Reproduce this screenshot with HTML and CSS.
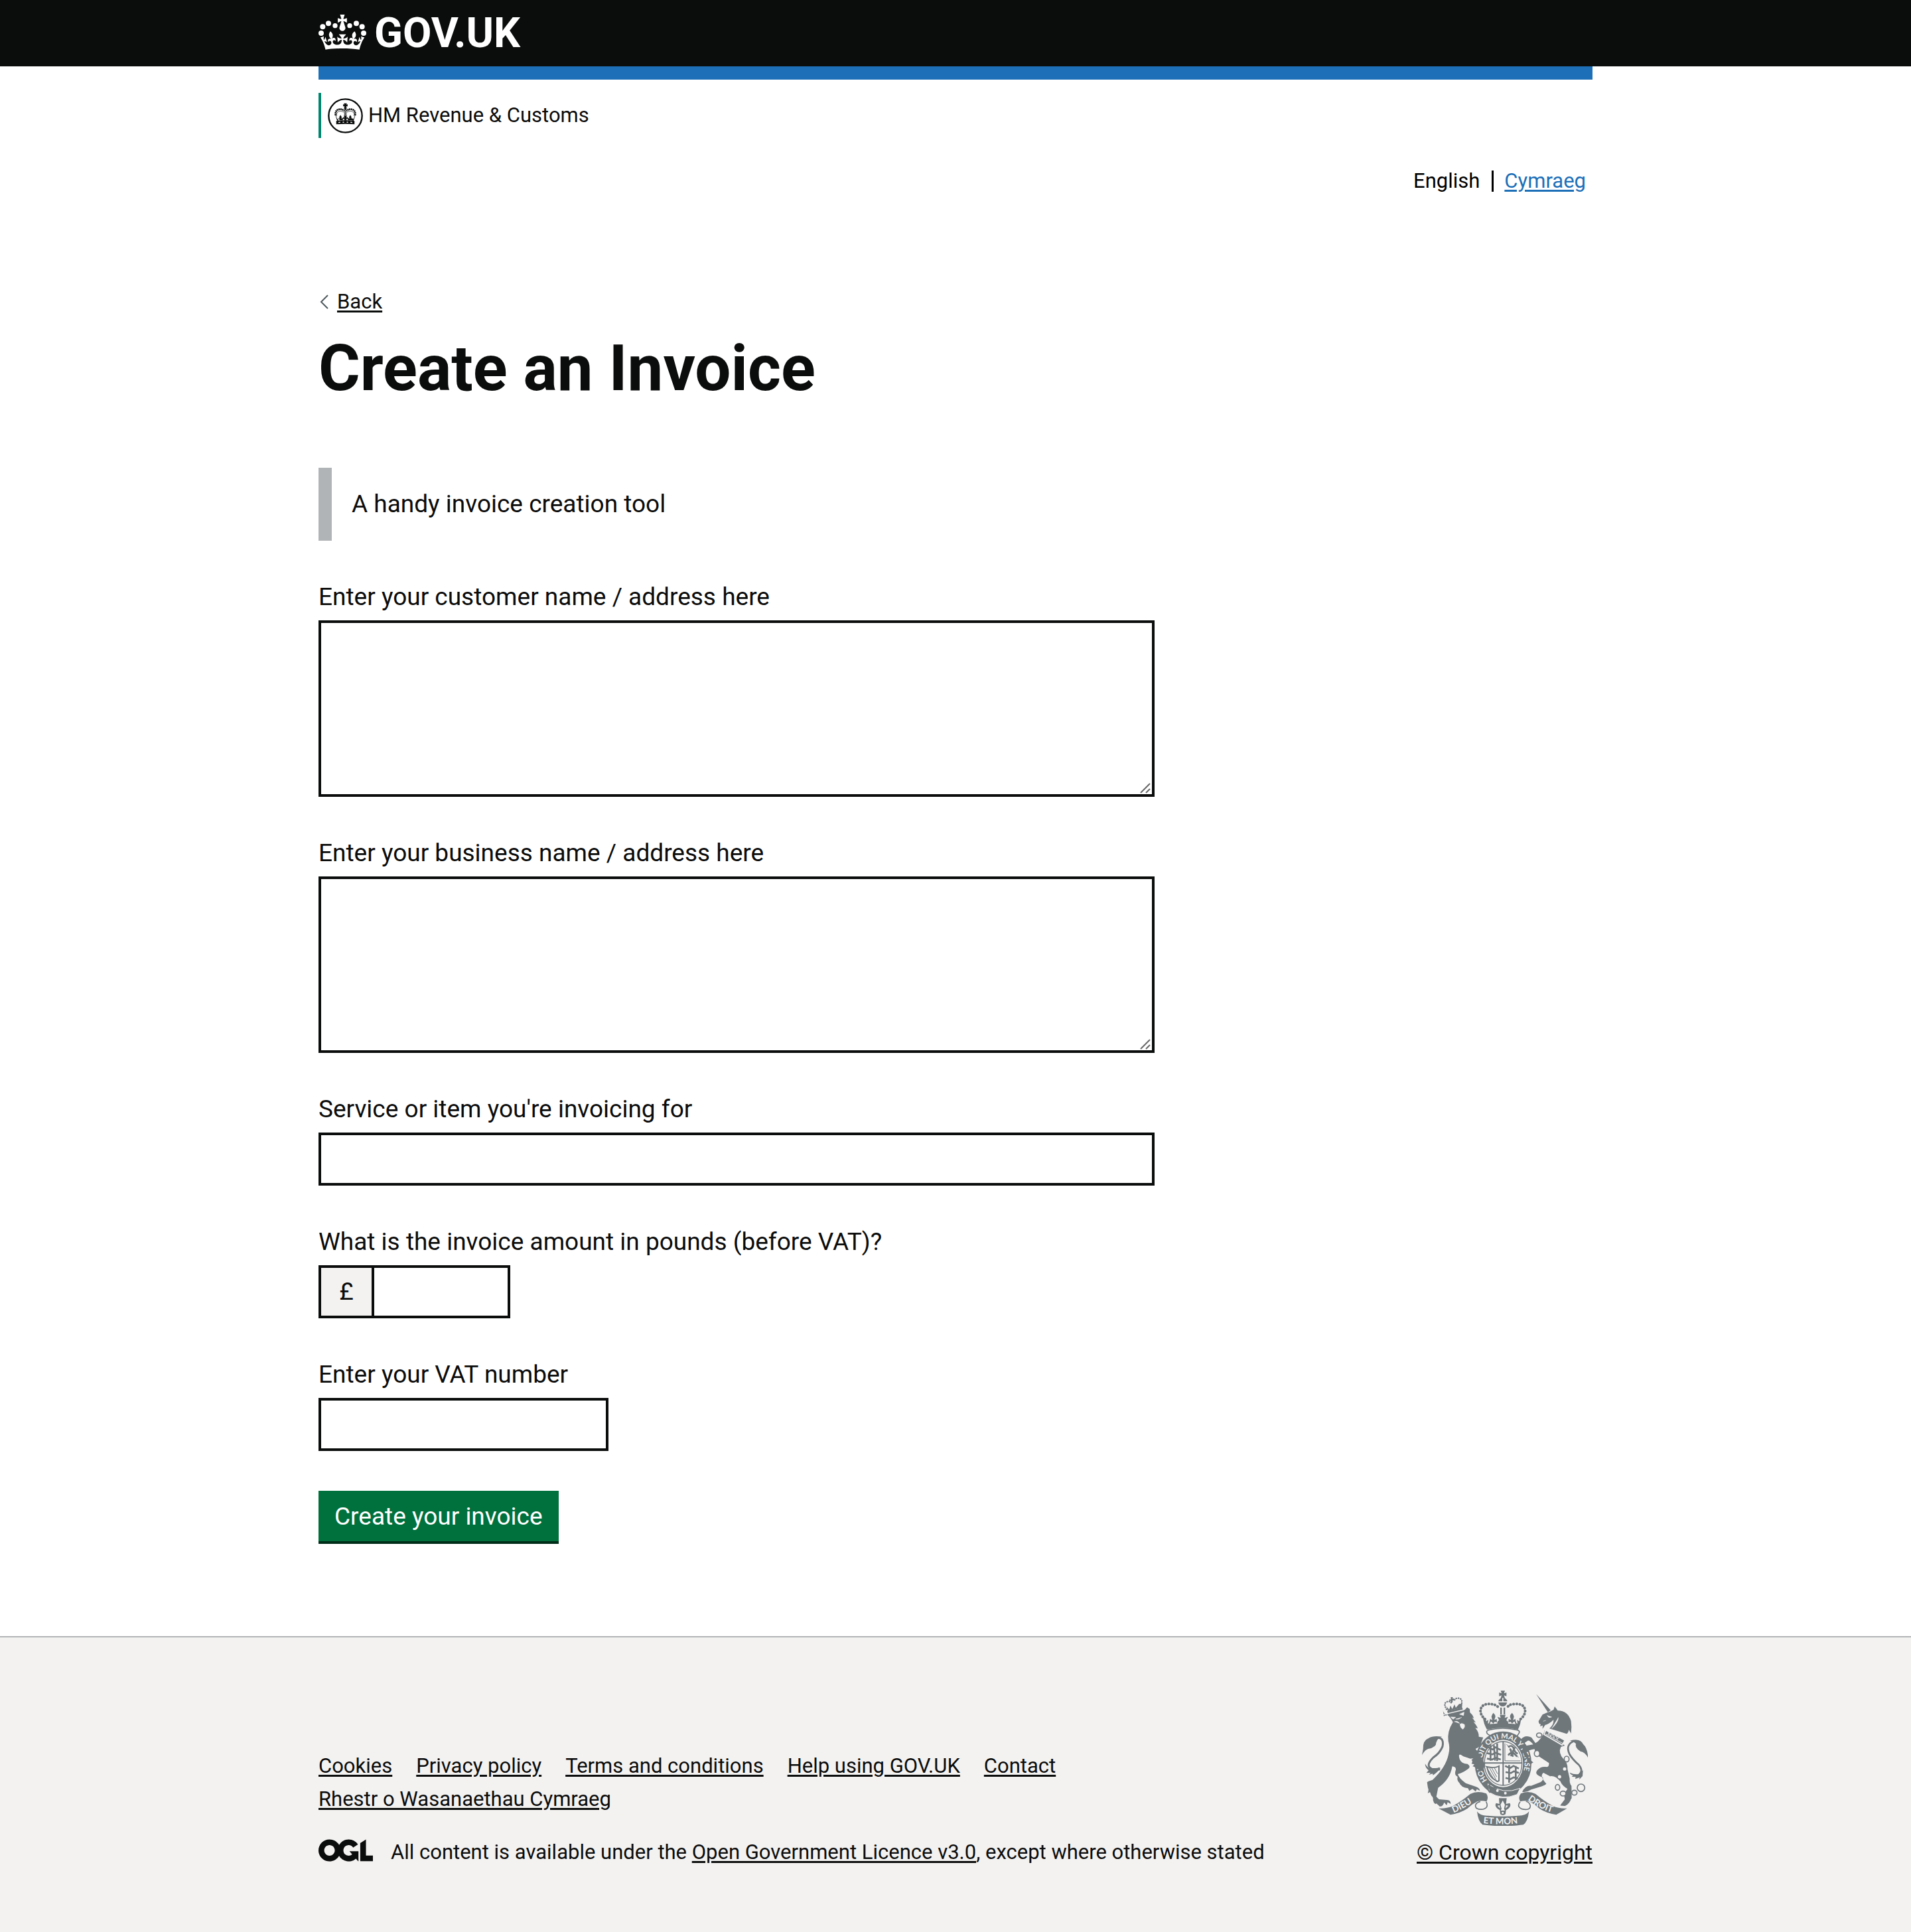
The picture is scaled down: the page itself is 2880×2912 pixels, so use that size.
FILE: index.html
```html
<!DOCTYPE html>
<html lang="en">
<head>
<meta charset="utf-8">
<meta name="viewport" content="width=device-width, initial-scale=1">
<title>Create an Invoice</title>
<link rel="stylesheet" href="styles.css">
</head>
<body>
<header class="header">
  <div class="container">
    <a class="header-logo" href="#">
      <svg class="header-crown" viewBox="30 33 216 159" aria-hidden="true">
        <g fill="#fff">
          <circle cx="42" cy="117" r="12"/><circle cx="49" cy="88" r="12"/><circle cx="75" cy="73" r="12"/><circle cx="105" cy="83" r="11"/>
          <circle cx="234" cy="117" r="12"/><circle cx="227" cy="88" r="12"/><circle cx="201" cy="73" r="12"/><circle cx="171" cy="83" r="11"/>
          <path transform="translate(38.2 33) scale(3.15)" d="M33.1,9.8c.2-.1.3-.3.5-.5l4.6,2.4v-6.8l-4.6,1.5c-.1-.2-.3-.3-.5-.5l1.9-5.9h-6.7l1.9,5.9c-.2.1-.3.3-.5.5l-4.6-1.5v6.8l4.6-2.4c.1.2.3.3.5.5l-2.6,8c-.9,2.8,1.2,5.7,4.1,5.7h0c3,0,5.1-2.9,4.1-5.7l-2.6-8Z"/>
          <path transform="translate(38.8 3.5) scale(3.13)" d="M37,37.9s-3.4,3.8-4.1,6.1c2.2,0,4.2-.5,6.4-2.8l-.7,8.5c-2-2.8-4.4-4.1-5.7-3.8.1,3.1.5,6.7,5.8,7.2,3.7.3,6.7-1.5,7-3.8.4-2.6-2-4.3-3.7-1.6-1.4-4.5,2.4-6.1,4.9-3.2-1.9-4.5-1.8-7.7,2.4-10.9,3,4,2.6,7.3-1.2,11.1,2.4-1.3,6.2,0,4,4.6-1.2-2.8-3.7-2.2-4.2.2-.3,1.7.7,3.7,3,4.2,1.9.3,4.7-.9,7-5.9-1.3,0-2.4.7-3.9,1.7l2.4-8c.6,2.3,1.4,3.7,2.2,4.5.6-1.6.5-2.8,0-5.3l5,1.8c-2.6,3.6-5.2,8.7-7.3,17.5-7.4-1.1-15.7-1.7-24.5-1.7h0c-8.8,0-17.1.6-24.5,1.7-2.1-8.9-4.7-13.9-7.3-17.5l5-1.8c-.5,2.5-.6,3.7,0,5.3.8-.8,1.6-2.3,2.2-4.5l2.4,8c-1.5-1-2.6-1.7-3.9-1.7,2.3,5,5.2,6.2,7,5.9,2.3-.4,3.3-2.4,3-4.2-.5-2.4-3-3.1-4.2-.2-2.2-4.6,1.6-6,4-4.6-3.7-3.7-4.2-7.1-1.2-11.1,4.2,3.2,4.3,6.4,2.4,10.9,2.5-2.8,6.3-1.3,4.9,3.2-1.8-2.7-4.1-1-3.7,1.6.3,2.3,3.3,4.1,7,3.8,5.4-.5,5.7-4.2,5.8-7.2-1.3-.2-3.7,1-5.7,3.8l-.7-8.5c2.2,2.3,4.2,2.7,6.4,2.8-.7-2.3-4.1-6.1-4.1-6.1h10.6Z"/>
        </g>
      </svg>
      <span>GOV.UK</span>
    </a>
  </div>
</header>

<div class="container page">
  <div class="phase-bar"></div>
  <div class="organisation">
    <svg class="organisation-crest" viewBox="71 53 158 158" aria-hidden="true">
      <circle cx="150" cy="132" r="75" fill="none" stroke="#0b0c0c" stroke-width="7"/>
      <g fill="#0b0c0c">
        <path d="M143 76h14l-3 6 6-2v10l-6-2 2 5h-12l2-5-6 2V80l6 2z"/>
        <circle cx="150" cy="98" r="6"/>
        <path d="M109 155q41-6 82 0v15q-41-3-82 0z"/>
        <path d="M103 122c2 10 6 17 10 32l12-2-5-8-6 3zM197 122c-2 10-6 17-10 32l-12-2 5-8 6 3zM128 128l6 11-4 6 8-3 1 10h-22l2-10 7 3-4-6zM172 128l6 11-4 6 7-3 2 10h-22l1-10 8 3-4-6zM143 132h14l-3 8 7-2v9l-7-2 2 8h-12l2-8-7 2v-9l7 2z"/>
      </g>
      <path d="M106 130c-4-30 24-33 39-21M194 130c4-30-24-33-39-21" fill="none" stroke="#0b0c0c" stroke-width="8" stroke-dasharray="6 2"/>
      <path d="M111 134c-4-24 17-27 32-18M189 134c4-24-17-27-32-18M146 104v30M154 104v30" fill="none" stroke="#0b0c0c" stroke-width="2"/>
      <path d="M150 104v28" stroke="#0b0c0c" stroke-width="6" stroke-dasharray="3 2"/>
      <path d="M119 162l8-1M138 161h6M156 161h6M173 161l8 1" stroke="#fff" stroke-width="4"/>
    </svg>
    <span>HM Revenue &amp; Customs</span>
  </div>

  <nav class="languages" aria-label="Language">
    <ul>
      <li>English</li>
      <li><a href="#" lang="cy">Cymraeg</a></li>
    </ul>
  </nav>

  <a class="back-link" href="#">
    <svg class="back-arrow" viewBox="0 0 16 24" aria-hidden="true"><path d="M14 2L4 12l10 10" fill="none" stroke="#505a5f" stroke-width="2"/></svg>
    <span>Back</span>
  </a>

  <main class="main">
    <h1>Create an Invoice</h1>
    <p class="inset">A handy invoice creation tool</p>
    <form>
      <div class="field">
        <label for="customer">Enter your customer name / address here</label>
        <div class="multiline"><textarea id="customer" rows="5"></textarea></div>
      </div>
      <div class="field">
        <label for="business">Enter your business name / address here</label>
        <div class="multiline"><textarea id="business" rows="5"></textarea></div>
      </div>
      <div class="field">
        <label for="item">Service or item you're invoicing for</label>
        <input id="item" type="text">
      </div>
      <div class="field">
        <label for="amount">What is the invoice amount in pounds (before VAT)?</label>
        <div class="prefixed">
          <span class="prefix" aria-hidden="true">£</span>
          <input class="width-5" id="amount" type="text">
        </div>
      </div>
      <div class="field">
        <label for="vat">Enter your VAT number</label>
        <input class="width-10" id="vat" type="text">
      </div>
      <button class="button" type="button">Create your invoice</button>
    </form>
  </main>
</div>

<footer class="footer">
  <div class="container footer-row">
    <div class="footer-main">
      <ul class="footer-links">
        <li><a href="#">Cookies</a></li>
        <li><a href="#">Privacy policy</a></li>
        <li><a href="#">Terms and conditions</a></li>
        <li><a href="#">Help using GOV.UK</a></li>
        <li><a href="#">Contact</a></li>
        <li><a href="#" lang="cy">Rhestr o Wasanaethau Cymraeg</a></li>
      </ul>
      <div class="licence">
        <svg class="licence-logo" viewBox="0 0 483.2 195.7" aria-hidden="true"><path fill="#0b0c0c" d="M421.5 142.8V.1l-50.7 32.3v161.1h112.4v-50.7zm-122.3-9.6A47.12 47.12 0 0 1 221 97.8c0-26 21.1-47.1 47.1-47.1 16.7 0 31.4 8.7 39.7 21.8l42.7-27.2A97.63 97.63 0 0 0 268.1 0c-36.5 0-68.3 20.1-85.1 49.7A98 98 0 0 0 97.8 0C43.9 0 0 43.9 0 97.8s43.9 97.8 97.8 97.8c36.5 0 68.3-20.1 85.1-49.7a97.76 97.76 0 0 0 149.6 25.4l19.4 22.2h3v-87.8h-80l24.3 27.5zM97.8 145c-26 0-47.1-21.1-47.1-47.1s21.1-47.1 47.1-47.1 47.1 21.1 47.1 47.1S123.8 145 97.8 145"/></svg>
        <p>All content is available under the <a href="#">Open Government Licence v3.0</a>, except where otherwise stated</p>
      </div>
    </div>
    <div class="copyright">
      <svg class="royal-arms" viewBox="102 83 750 612" aria-hidden="true">
        <defs>
          <path id="garter-top" d="M397 489A97 113 0 1 1 541 489"/>
          <path id="scroll-left" d="M245 636Q302 612 350 576"/>
          <path id="scroll-mid" d="M379 683Q468 694 558 681"/>
          <path id="scroll-right" d="M580 577Q640 624 706 639"/>
        </defs>
        <!-- crown -->
        <g fill="#6f777b">
          <path d="M458 84h19l-4 12 11-4v17l-11-4 4 12h-19l4-12-11 4V92l11 4zM465 115v17h-18q4-14 18-17zM470 115q15 3 18 17h-18zM447 137h40q-5 18-20 18t-20-18z"/>
          <path d="M456 160h7v32h-7zM471 160h7v32h-7z"/>
          <path d="M384 206l10 16 8-7-2 18q8-1 7-11 9 4 1 13l17-2-9-9-9 2 3-15 10 6-4-16q2-10 9-17 9 8 9 18l-5 14 11-4 1 15-10-2-7 9 18-2q0-12 9-14l-8-16 15 5-4-14h26l-4 14 15-5-8 16q9 2 9 14l18 2-7-9-10 2 1-15 11 4-5-14q0-10 9-18 8 7 9 17l-4 16 10-6 3 15-9-2-9 9 17 2q-8-9 1-13-1 10 7 11l-2-18 8 7 10-16q0 25-14 54-70-17-140 0-16-28-18-54z"/>
        </g>
        <path d="M387 212C354 186 362 143 404 144q35 0 45 18M548 212c33-26 25-69-17-68-35 0-36 7-46 18" fill="none" stroke="#6f777b" stroke-width="12" stroke-linecap="round" stroke-dasharray="1 13"/>
        <path d="M402 262q65-16 132 0 13 4 6 15l-8 12M402 262q-13 5-4 17l14 9" fill="none" stroke="#6f777b" stroke-width="5"/>
        <!-- garter and shield -->
        <ellipse cx="469" cy="413" rx="109" ry="126" fill="none" stroke="#6f777b" stroke-width="38"/>
        <ellipse cx="469" cy="413" rx="85" ry="99" fill="none" stroke="#6f777b" stroke-width="4"/>
        <g fill="none" stroke="#6f777b">
          <path d="M469 312v201M384 411h170" stroke-width="6"/>
          <path d="M477 322v79h70M484 326l54 60" stroke-width="3"/>
          <path d="M402 340l20 10 12-10 24 12M396 366l24 6 14-8 26 10M396 391l24 4 14-8 24 8M412 330v70M442 322v80M427 330l6 70" stroke-width="8"/>
          <path d="M478 424l22 10 16-10 24 12M480 452l24 4 14-8 22 8M480 478l22 6 14-8 20 4M496 420v80M526 424v64" stroke-width="8"/>
          <path d="M491 338q20-12 26 8t18 22M492 376q16-24 40 6M500 346l14 36M522 340l-18 40" stroke-width="8"/>
          <path d="M395 428q36 8 55-3v66q-8 7-14-2-30-12-40-60z" stroke-width="6"/>
          <path d="M408 434l28 50M418 434l22 40M430 434l14 26M400 440l26 42" stroke-width="3"/>
        </g>
        <path d="M400 505q70 52 146 20l-14 28q-66 28-125-9z" fill="#6f777b" stroke="#f3f2f1" stroke-width="3"/>
        <path d="M415 503q-28 18-4 42M398 524l36-2q14 14-6 22" fill="none" stroke="#6f777b" stroke-width="6"/>
        <circle cx="443" cy="536" r="6" fill="#f3f2f1"/><circle cx="479" cy="547" r="6" fill="#f3f2f1"/>
        <text class="arms-garter"><textPath href="#garter-top">HON SOIT QUI MAL Y PENSE</textPath></text>
        <!-- lion -->
        <g fill="#6f777b">
          <path d="M202 208q-4-14 10-12l16-11 68-15 10-11 12 8 1 15q14 12 18 26l-8-3 16 23-10-3q16 18 19 30l-11-3q18 22 16 40l20 3-8 22q-2 20-27 30 22 26 27 45l17 23-8 26q-13-2-14 14l-12-18-5 6q-6-16-18-17l8-9-13-3q8-14-1-16l9-8-14 1q-14-4-31-10-28-22-16 14 9 20 35 20 20 14-2 26-22 16-42 20 6 20 36 41l48 17q16 6 16 18l-14-8-5 11-15-12-14 9-6-12q-30-2-39-24-12-10-8-28-15-8-10-25 8-20-14-22-10 60-64 97l-8 40 12 12 35 3q18-1 18 18l-14-8-4 14-12-13q-4 19-20 18l-14-13q-10 7-16-16 2-12-8-20l-6-16-10 6q6-18 1-24l-4-26 7-5 18-6q60-56 72-115 8-30-1-60-6-44 21-86-11-22-24-32-20-7-21-22z"/>
          <path d="M216 176l68-16 4 13-68 17zM232 113h10l-2 7 7-1v9l-7-1 1 10h-9l1-8-7 3v-9l7 1z"/>
          <path d="M213 155l12 14 6-18 8 16 10-21 6 15 15-17 14-1-1 18-64 15z"/>
        </g>
        <path d="M213 168q-16-28 2-34 13-6 22 8M279 150q10-28-10-32-18-2-21 12" fill="none" stroke="#6f777b" stroke-width="7" stroke-linecap="round" stroke-dasharray="1 9"/>
        <path d="M232 203l22 1-11 9zM272 190l20-9-2 15zM274 235q8-7 20 2 4 12-7 21-12-6-13-23zM254 212q14 4 28-8M248 224q16-6 24 8" fill="#f3f2f1" stroke="#f3f2f1" stroke-width="2"/>
        <path d="M198 192l94-22" stroke="#f3f2f1" stroke-width="4"/>
        <path d="M160 300q44-12 35 36-12 30-42 50-38 38-6 52l37 2M150 460l32-26" fill="none" stroke="#6f777b" stroke-width="9"/>
        <path d="M193 292q-42-6-60 6-28 10-26 50l-5 27q12-22 28-28 38-8 36-28 6-22 27-27zM116 414q12 22 28 22l41-4q-6 16-34 35l2-9-20 6 8-9-19 1 10-12q-16-12-16-30z" fill="#6f777b"/>
        <!-- unicorn -->
        <g fill="#6f777b">
          <path d="M618 99l66 73-13 9z"/>
          <path d="M629 222l18-30 17-8 17-6 16-8 5-15 14 19q46 0 60 48 4 26 0 55l-10-16q-2 14-10 18l-78-24q20-16 19-40-20 20-38 24l-12 18 1-16-12 4 3-10q-8 3-10-13z"/>
          <path d="M654 262l94 70-18 6q-14 28 14 58 18 16 16 42l10 44q-2 22 8 32l1 56q-20 24-30 34l-21-1q14-18 21-22-10-30 11-53-26-16-32-34-24-28-47-23l-30-16q-18 14 10 46 12 6-20 16l-45 14q-20 14-41 10 16-30 40-27l42-16q14-6 12-22-42-12-26-32 16-20 45-15 10-4 8-18l-48-32q-14-10-17-31l-12 2-26 8q10 18 12 31 18 20 21 18l-13 10-15-10-1-14-14-18q-10-24-4-40l46-8q-16-20-25-17l-15 11q-10-2-16-16 18-24 48-10l18 26q22-10 42-54z"/>
          <path d="M771 310q46-14 60 16 16 14 21 48v12q-12-24-34-28-26-16-20-34-4-8-27-14zM770 454q20 10 40 7l20-17-2 26-15 16 2-10-20 7 2-9-18-1 6-6q-12-4-15-13z"/>
          <path d="M755 565l22 4q-6 26-28 36l-22-2z"/>
        </g>
        <path d="M786 313q-36 16-17 58 14 24 42 48 22 26 2 44" fill="none" stroke="#6f777b" stroke-width="8"/>
        <path d="M662 262l86 46-12 22-82-48z" fill="#6f777b" stroke="#f3f2f1" stroke-width="5"/>
        <path d="M662 280l76 42M672 285l4-14 8 20 8-14 6 20 11-12 4 20 10-12" fill="none" stroke="#f3f2f1" stroke-width="3"/>
        <path d="M668 196l20 7-12 2zM650 222l12-4M718 205q2 20-30 50" fill="#f3f2f1" stroke="#f3f2f1" stroke-width="2"/>
        <g fill="#f3f2f1" stroke="#6f777b" stroke-width="5">
          <ellipse cx="632" cy="285" rx="12" ry="10"/><ellipse cx="622" cy="368" rx="12" ry="14"/><ellipse cx="756" cy="393" rx="11" ry="13"/><circle cx="747" cy="438" r="10"/><circle cx="724" cy="473" r="10"/><ellipse cx="715" cy="521" rx="10" ry="13"/><ellipse cx="740" cy="549" rx="13" ry="11"/><ellipse cx="791" cy="545" rx="12" ry="11"/><circle cx="821" cy="523" r="17"/>
        </g>
        <!-- scroll -->
        <g fill="#6f777b">
          <path d="M177 616q35 2 65-11 38-20 78-54 32-17 73-2 12 18 1 36-22-7-42 0-24 12-45 32-30 20-76 28z"/>
          <path d="M758 616q-36 2-64-11-38-20-78-54-32-17-67-2-14 18-3 36 22-7 42 0 24 12 45 32 30 20 76 28z"/>
          <path d="M351 630q14 20 48 19 70 6 138 0 36 0 49-19-6 48-26 60-92 12-184 0-20-14-25-60z"/>
          <path d="M450 570h35l-3 26 17-4q8 12-7 26l-10 6-2 18q-13 10-24 0l-2-18-10-6q-15-14-7-26l15 4z"/>
        </g>
        <path d="M392 586q14 26-14 34-36 4-34-19 4-12 22-16M546 586q-18 22 8 33 38 8 38-15-4-16-20-20" fill="none" stroke="#6f777b" stroke-width="5"/>
        <path d="M467 580l10 20-4 18 4 8h-19l4-8-5-18zM443 604l10-2 2 14zM492 604l-10-2-2 14zM463 632h8v8h-8z" fill="#f3f2f1"/>
        <text class="arms-scroll"><textPath href="#scroll-left">DIEU</textPath></text>
        <text class="arms-scroll"><textPath href="#scroll-mid">ET MON</textPath></text>
        <text class="arms-scroll"><textPath href="#scroll-right">DROIT</textPath></text>
      </svg>
      <a href="#">© Crown copyright</a>
    </div>
  </div>
</footer>
</body>
</html>
```
FILE: styles.css
```css
*,
*::before,
*::after {
  box-sizing: border-box;
}

body {
  margin: 0;
  background: #fff;
  color: #0b0c0c;
  font-family: Roboto, "Liberation Sans", sans-serif;
  font-size: 31px;
  line-height: 40px;
}

a {
  color: inherit;
  text-decoration: underline;
  text-decoration-thickness: 3px;
  text-underline-offset: 3px;
}

ul,
p {
  margin: 0;
  padding: 0;
  list-style: none;
}

.container {
  width: calc(100% - 60px);
  max-width: 1920px;
  margin: 0 auto;
}

/* Header */

.header {
  background: #0b0c0c;
  color: #fff;
}

.header-logo {
  display: inline-flex;
  align-items: center;
  gap: 12px;
  height: 100px;
  font-size: 63px;
  font-weight: 700;
  line-height: 60px;
  text-decoration: none;
  vertical-align: top;
}

.header-crown {
  width: 72px;
  height: 53px;
  margin-bottom: 4px;
}

.phase-bar {
  height: 20px;
  background: #1d70b8;
}

.organisation {
  display: flex;
  align-items: center;
  gap: 8px;
  height: 68px;
  margin-top: 20px;
  padding-left: 10px;
  border-left: 4px solid #008670;
}

.organisation-crest {
  width: 53px;
  height: 53px;
}

.languages {
  margin-top: 45px;
  padding-right: 10px;
  color: #000;
}

.languages ul {
  display: flex;
  align-items: center;
  justify-content: flex-end;
}

.languages li + li {
  margin-left: 18px;
  padding-left: 16px;
  border-left: 3px solid #000;
  line-height: 32px;
}

.languages a {
  color: #1d70b8;
}

.back-link {
  display: flex;
  align-items: center;
  gap: 12px;
  width: fit-content;
  margin-top: 142px;
}

.back-arrow {
  width: 16px;
  height: 24px;
}

/* Form */

.main {
  max-width: 1260px;
  padding: 30px 0 139px;
}

h1 {
  margin: 0 0 100px;
  font-size: 96px;
  font-weight: 700;
  line-height: 100px;
}

.inset {
  margin-bottom: 60px;
  padding: 30px;
  border-left: 20px solid #b1b4b6;
  font-size: 37px;
  line-height: 50px;
}

.field {
  margin-bottom: 60px;
}

label {
  display: block;
  margin-bottom: 10px;
  font-size: 37px;
  line-height: 50px;
}

input,
textarea {
  display: block;
  width: 100%;
  padding: 10px;
  border: 4px solid #0b0c0c;
  border-radius: 0;
  background: #fff;
  color: #0b0c0c;
  font: inherit;
  font-size: 37px;
}

input {
  height: 80px;
}

textarea {
  min-height: 266px;
  line-height: 47px;
  resize: vertical;
}

textarea::-webkit-resizer {
  display: none;
}

.multiline {
  position: relative;
}

/* Resize grip in the corner of a text area */
.multiline::after {
  content: "";
  position: absolute;
  right: 4px;
  bottom: 4px;
  width: 20px;
  height: 20px;
  background: url("data:image/svg+xml,%3Csvg xmlns='http://www.w3.org/2000/svg' width='20' height='20'%3E%3Cpath d='M3 18L17 4M11 18l6-6' stroke='%23666' stroke-width='2'/%3E%3C/svg%3E") no-repeat;
  pointer-events: none;
}

.prefixed {
  display: flex;
}

.prefix {
  width: 80px;
  border: 4px solid #0b0c0c;
  border-right: 0;
  background: #f3f2f1;
  font-size: 37px;
  line-height: 72px;
  text-align: center;
}

.width-5 {
  width: 209px;
}

.width-10 {
  width: 437px;
}

.button {
  display: block;
  margin: 0 0 4px;
  padding: 20px 24px 18px;
  border: 0;
  background: #00703c;
  box-shadow: 0 4px 0 #002d18;
  color: #fff;
  font: inherit;
  font-size: 37px;
  line-height: 38px;
}

/* Footer */

.footer {
  padding: 80px 0 100px;
  border-top: 2px solid #b1b4b6;
  background: #f3f2f1;
}

.footer-row {
  display: flex;
  align-items: flex-end;
  justify-content: space-between;
  gap: 60px;
}

.footer-main {
  flex: 1;
}

.footer-links {
  display: flex;
  flex-wrap: wrap;
  gap: 10px 36px;
  max-width: 1260px;
  margin-bottom: 40px;
}

.licence {
  display: flex;
  align-items: flex-start;
  gap: 27px;
}

.licence-logo {
  flex: none;
  width: 82px;
  height: 34px;
}

.copyright {
  display: flex;
  flex-direction: column;
  align-items: center;
  gap: 20px;
  font-size: 32px;
}

.royal-arms {
  width: 250px;
  height: 204px;
}

.arms-garter,
.arms-scroll {
  fill: #f3f2f1;
  font-family: Lato, sans-serif;
  font-weight: 700;
}

.arms-garter {
  font-size: 33px;
}

.arms-scroll {
  font-size: 40px;
}
```
